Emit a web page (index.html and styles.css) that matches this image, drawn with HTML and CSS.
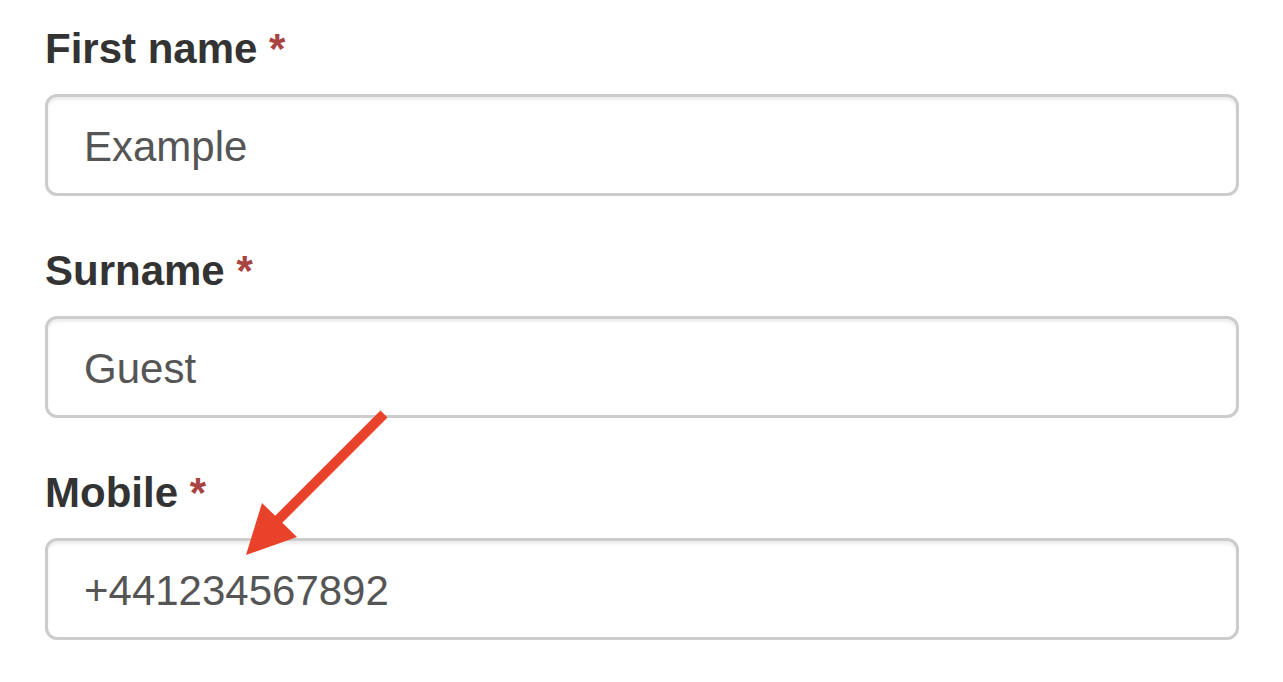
FILE: index.html
```html
<!DOCTYPE html>
<html>
<head>
<meta charset="utf-8">
<link rel="stylesheet" href="styles.css">
</head>
<body>
<form class="form">
  <div class="form-group">
    <label class="label">First name <span class="req">*</span></label>
    <input class="input" type="text" value="Example">
  </div>
  <div class="form-group">
    <label class="label">Surname <span class="req">*</span></label>
    <input class="input" type="text" value="Guest">
  </div>
  <div class="form-group">
    <label class="label">Mobile <span class="req">*</span></label>
    <input class="input" type="text" value="+441234567892">
  </div>
</form>
<svg class="arrow" width="1283" height="682" viewBox="0 0 1283 682">
  <line x1="384" y1="414" x2="278" y2="520" stroke="#e8432a" stroke-width="10" stroke-linecap="butt"/>
  <polygon points="246,555 262,503 297,537" fill="#e8432a"/>
</svg>
</body>
</html>
```

FILE: styles.css
```css
html, body {
  margin: 0;
  padding: 0;
  background: #fff;
}
body {
  width: 1283px;
  height: 682px;
  overflow: hidden;
  position: relative;
  font-family: "Liberation Sans", Arial, Helvetica, sans-serif;
}
.form {
  padding: 19px 44px 0 45px;
}
.form-group {
  margin-bottom: 45px;
}
.label {
  display: block;
  font-size: 42px;
  line-height: 60px;
  font-weight: bold;
  color: #333;
  margin-bottom: 15px;
}
.req {
  color: #a94442;
}
.input {
  display: block;
  box-sizing: border-box;
  width: 1194px;
  height: 102px;
  margin: 0;
  padding: 20px 36px 16px 36px;
  border: 3px solid #ccc;
  border-radius: 12px;
  box-shadow: inset 0 3px 3px rgba(0,0,0,0.075);
  font-family: "Liberation Sans", Arial, Helvetica, sans-serif;
  font-size: 42px;
  line-height: 60px;
  color: #555;
  background: #fff;
  outline: none;
}
.arrow {
  position: absolute;
  left: 0;
  top: 0;
  pointer-events: none;
}
```
